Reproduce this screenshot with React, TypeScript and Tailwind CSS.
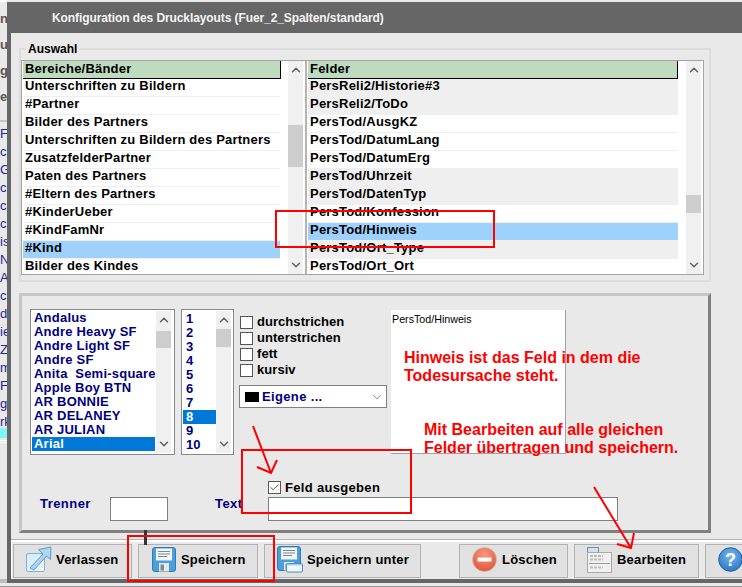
import React from 'react';
import { ChevronUp, ChevronDown, Check } from 'lucide-react';

const bereiche = [
  'Unterschriften zu Bildern',
  '#Partner',
  'Bilder des Partners',
  'Unterschriften zu Bildern des Partners',
  'ZusatzfelderPartner',
  'Paten des Partners',
  '#Eltern des Partners',
  '#KinderUeber',
  '#KindFamNr',
  '#Kind',
  'Bilder des Kindes',
];

const felder = [
  { t: 'PersReli2/Historie#3', gray: true },
  { t: 'PersReli2/ToDo', gray: true },
  { t: 'PersTod/AusgKZ' },
  { t: 'PersTod/DatumLang' },
  { t: 'PersTod/DatumErg' },
  { t: 'PersTod/Uhrzeit', gray: true },
  { t: 'PersTod/DatenTyp', gray: true },
  { t: 'PersTod/Konfession' },
  { t: 'PersTod/Hinweis', sel: true },
  { t: 'PersTod/Ort_Type', gray: true },
  { t: 'PersTod/Ort_Ort' },
];

const fonts = ['Andalus', 'Andre Heavy SF', 'Andre Light SF', 'Andre SF', 'Anita  Semi-square', 'Apple Boy BTN', 'AR BONNIE', 'AR DELANEY', 'AR JULIAN', 'Arial'];
const sizes = ['1', '2', '3', '4', '5', '6', '7', '8', '9', '10'];
const stripTop = ['n', 'ut', 'g', 'el'];
const stripList = ['Fa', 'ck', 'Ge', 'ck', 'ck', 'ck', 'is', 'Nr', 'Au', 'ck', 'de', 'ie', 'Ze', 'm', 'Fa', 'g', 'rk'];

function Track({ thumbTop, thumbH, className }: { thumbTop: number; thumbH: number; className: string }) {
  return (
    <div className={`relative flex flex-col items-center justify-between bg-[#f0f0f0] text-[#606060] ${className}`}>
      <ChevronUp size={14} strokeWidth={2.5} className="mt-[2px]" />
      <div className="absolute left-0 right-0 bg-[#cdcdcd]" style={{ top: thumbTop, height: thumbH }} />
      <ChevronDown size={14} strokeWidth={2.5} className="mb-[2px]" />
    </div>
  );
}

function Box({ label }: { label: string }) {
  return (
    <div className="flex h-[16px] items-center">
      <div className="h-[13px] w-[13px] border border-[#555] bg-white" />
      <span className="ml-[4px] text-[13px] font-bold tracking-[0.05px] text-black">{label}</span>
    </div>
  );
}

function VerlassenIcon() {
  return (
    <svg width="26" height="27" viewBox="0 0 26 27">
      <defs>
        <linearGradient id="vg" x1="0" y1="0" x2="1" y2="1">
          <stop offset="0" stopColor="#cfeafb" />
          <stop offset="1" stopColor="#f3fafe" />
        </linearGradient>
      </defs>
      <rect x="0.5" y="7.5" width="18" height="18" rx="1.5" fill="url(#vg)" stroke="#7fb2d6" />
      <path d="M4 22 L17 8 L12.5 3.5 L25 1 L24.5 13.5 L20.5 10 L8 24 Z" fill="#a9d6f3" stroke="#5f9cc8" strokeWidth="1" />
    </svg>
  );
}

function Floppy() {
  return (
    <>
      <rect x="0.5" y="0.5" width="23" height="24" rx="2.5" fill="#4b9fdd" stroke="#2f79b5" />
      <rect x="4" y="1.5" width="16" height="12" fill="#f4f6f8" />
      <path d="M6 4.5 H18 M6 7 H18 M6 9.5 H15" stroke="#7d8790" strokeWidth="1" />
      <rect x="7" y="16" width="10" height="8.5" fill="#e6e9ec" />
      <rect x="8.5" y="17.5" width="3.5" height="6" fill="#7f8a94" />
    </>
  );
}

function SaveIcon() {
  return (
    <svg width="24" height="25" viewBox="0 0 24 25">
      <Floppy />
    </svg>
  );
}

function SaveAsIcon() {
  return (
    <svg width="26" height="27" viewBox="0 0 26 27">
      <Floppy />
      <rect x="9.5" y="17.5" width="16" height="8.5" rx="1" fill="#f3f8fc" stroke="#4b8fc4" />
      <rect x="10" y="18" width="15" height="1.5" fill="#a7cce8" />
    </svg>
  );
}

function DeleteIcon() {
  return (
    <svg width="25" height="25" viewBox="0 0 25 25">
      <defs>
        <radialGradient id="dg" cx="0.5" cy="0.3" r="0.8">
          <stop offset="0" stopColor="#f79a80" />
          <stop offset="1" stopColor="#de4a2c" />
        </radialGradient>
      </defs>
      <circle cx="12.5" cy="12.5" r="12" fill="url(#dg)" stroke="#c9c2bc" strokeWidth="0.8" />
      <rect x="5.5" y="10.5" width="14" height="4" rx="0.5" fill="#ffffff" />
    </svg>
  );
}

function EditIcon() {
  return (
    <svg width="25" height="26" viewBox="0 0 25 26">
      <rect x="0.5" y="0.5" width="11" height="5" fill="#cfe0ee" stroke="#6d8fab" />
      <rect x="0.5" y="5.5" width="24" height="20" fill="#f0f0f0" stroke="#a8a8a8" />
      <path d="M3 9 H16 M3 12.5 H16 M3 20.5 H16" stroke="#bdbdbd" strokeWidth="2" strokeDasharray="3 1" />
      <path d="M2 16.5 H23" stroke="#9a9a9a" strokeWidth="1" />
    </svg>
  );
}

function HelpIcon() {
  return (
    <svg width="25" height="25" viewBox="0 0 25 25" className="flex-none">
      <defs>
        <radialGradient id="hg" cx="0.5" cy="0.35" r="0.75">
          <stop offset="0" stopColor="#79b8ee" />
          <stop offset="1" stopColor="#1f6fc0" />
        </radialGradient>
      </defs>
      <circle cx="12.5" cy="12.5" r="11.8" fill="url(#hg)" stroke="#1b5fa6" />
      <text x="12.5" y="19" textAnchor="middle" fontSize="18" fontWeight="700" fill="#ffffff" fontFamily="Liberation Sans, sans-serif">?</text>
    </svg>
  );
}

function BarButton({ w, pl, gap, icon, label }: { w: string; pl: string; gap: string; icon: React.ReactNode; label?: string }) {
  return (
    <div className={`flex h-[34px] flex-none items-center border border-[#b2b2b2] bg-[#e1e1e1] pb-[3px] ${w} ${pl}`}>
      {icon}
      {label && <span className={`text-[13px] font-bold tracking-[0.2px] text-black ${gap}`}>{label}</span>}
    </div>
  );
}

export default function App() {
  return (
    <div className="relative flex h-[587px] w-[742px] overflow-hidden bg-[#e9e9e9] font-['Liberation_Sans',Arial,sans-serif]">
      {/* what is left visible of the main window behind the dialog */}
      <div className="flex w-[7px] flex-none flex-col overflow-hidden whitespace-nowrap">
        <div className="h-[2px] flex-none bg-white" />
        <div className="flex flex-none flex-col pt-[9px] text-[13px] font-bold text-[#555]">
          {stripTop.map((s, i) => (
            <div key={i} className="h-[26px] leading-[16px]">{s}</div>
          ))}
        </div>
        <div className="mt-[5px] h-[2px] flex-none bg-[#c4c4c4]" />
        <div className="flex flex-none flex-col pt-[3px] text-[13px] text-[#24249a]">
          {stripList.map((s, i) => (
            <div key={i} className="h-[18px] leading-[18px]">{s}</div>
          ))}
        </div>
        <div className="mt-[-3px] h-[10px] flex-none bg-[#7ff6f6]" />
        <div className="mt-[2px] h-[1px] flex-none bg-white" />
        <div className="mt-[1px] h-[1px] flex-none bg-white" />
        <div className="mt-auto mb-[4px] h-[4px] flex-none bg-[#bdbdbd]" />
      </div>

      {/* dialog */}
      <div className="mt-[2px] mb-[4px] flex w-[760px] flex-none flex-col">
        <div className="flex h-[31px] flex-none items-center bg-[#666666] pl-[45px] text-[12px] font-bold tracking-[-0.09px] text-[#f4f4f4]">
          Konfiguration des Drucklayouts (Fuer_2_Spalten/standard)
        </div>

        <div className="flex flex-1 flex-col border-b-4 border-l-4 border-[#666666] bg-[#e9e9e9]">
          <fieldset className="ml-[8px] mt-[7px] h-[242px] w-[692px] flex-none border-2 border-[#dcdcdc] pl-0">
            <legend className="ml-[5px] px-[2px] text-[12px] font-bold leading-[18px] text-black">Auswahl</legend>
            <div className="mt-[2px] flex h-[215px] w-[683px] overflow-hidden border border-[#a4a4a4] bg-white text-[13px] font-bold tracking-[0.21px] text-black">
              <div className="flex w-[285px] flex-none border-r-2 border-[#b4b4b4]">
                <div className="w-[258px] flex-none pl-[1px]">
                  <div className="h-[18px] w-[258px] border-b border-r border-black bg-[#bfdbbf] pl-[2px] leading-[15px]">Bereiche/Bänder</div>
                  {bereiche.map((b) => (
                    <div key={b} className={`h-[18px] whitespace-nowrap border-b border-[#efefef] pl-[2px] leading-[13px] ${b === '#Kind' ? 'bg-[#9fd1fd]' : ''}`}>
                      {b}
                    </div>
                  ))}
                </div>
                <Track thumbTop={64} thumbH={42} className="ml-[8px] w-[15px] flex-none" />
              </div>
              <div className="flex flex-1">
                <div className="ml-[1px] w-[370px] flex-none">
                  <div className="h-[18px] border-b border-r border-black bg-[#bfdbbf] pl-[2px] leading-[15px]">Felder</div>
                  {felder.map((f) => (
                    <div
                      key={f.t}
                      className={`h-[18px] whitespace-nowrap border-b border-[#efefef] pl-[2px] leading-[13px] ${f.sel ? 'bg-[#9fd1fd]' : f.gray ? 'bg-[#efefef]' : ''}`}
                    >
                      {f.t}
                    </div>
                  ))}
                </div>
                <Track thumbTop={134} thumbH={18} className="ml-[8px] w-[15px] flex-none" />
              </div>
            </div>
          </fieldset>

          <div className="ml-[8px] mt-[11px] flex h-[240px] w-[692px] flex-none flex-col border-[3px] border-b-[#808080] border-l-[#c6c6c6] border-r-[#808080] border-t-[#c6c6c6]">
            <div className="ml-[8px] mt-[13px] flex h-[146px] flex-none items-start">
              <div className="flex h-[146px] w-[145px] flex-none overflow-hidden border border-[#8a8a8a] bg-white text-[13px] font-bold leading-[14px] tracking-[0.22px] text-[#000080]">
                <div className="w-[124px] flex-none pl-[1px] pt-[1px]">
                  {fonts.map((f) => (
                    <div key={f} className={`h-[14px] whitespace-pre pl-[2px] ${f === 'Arial' ? 'bg-[#0078d7] text-white' : ''}`}>{f}</div>
                  ))}
                </div>
                <Track thumbTop={20} thumbH={17} className="my-[1px] ml-[1px] w-[15px] flex-none" />
              </div>
              <div className="ml-[6px] flex h-[146px] w-[53px] flex-none overflow-hidden border border-[#8a8a8a] bg-white text-[13px] font-bold leading-[14px] text-[#000080]">
                <div className="w-[34px] flex-none pl-[1px] pt-[2px]">
                  {sizes.map((s) => (
                    <div key={s} className={`h-[14px] pl-[3px] ${s === '8' ? 'bg-[#0078d7] text-white' : ''}`}>{s}</div>
                  ))}
                </div>
                <Track thumbTop={18} thumbH={18} className="my-[1px] w-[15px] flex-none" />
              </div>
              <div className="ml-[5px] flex w-[148px] flex-none flex-col pt-[5px]">
                <div className="pl-[1px]">
                  <Box label="durchstrichen" />
                  <Box label="unterstrichen" />
                  <Box label="fett" />
                  <Box label="kursiv" />
                </div>
                <div className="mt-[7px] flex h-[23px] items-center border border-[#808080] bg-white pl-[5px] pr-[2px]">
                  <div className="h-[10px] w-[14px] flex-none bg-black" />
                  <span className="ml-[3px] text-[13px] font-bold tracking-[0.35px] text-[#000080]">Eigene ...</span>
                  <ChevronDown size={14} strokeWidth={1.2} className="ml-auto text-[#555]" />
                </div>
              </div>
              <div className="ml-[4px] mt-[1px] h-[144px] w-[175px] flex-none border-b border-r border-[#a0a0a0] bg-white pl-[1px] pt-[3px] text-[10.7px] leading-[12px] text-black">
                PersTod/Hinweis
              </div>
            </div>

            <div className="ml-[246px] mt-[26px] flex h-[13px] flex-none items-center">
              <div className="flex h-[13px] w-[13px] flex-none items-center justify-center border border-[#555] bg-white text-[#444]">
                <Check size={11} strokeWidth={2} />
              </div>
              <span className="ml-[4px] text-[13px] font-bold tracking-[0.32px] text-black">Feld ausgeben</span>
            </div>

            <div className="mt-[3px] flex flex-none items-start text-[13px] font-bold tracking-[0.45px] text-[#000080]">
              <span className="ml-[18px] w-[70px] leading-[14px]">Trenner</span>
              <div className="h-[24px] w-[58px] border border-[#808080] bg-white" />
              <span className="ml-[47px] w-[53px] leading-[14px]">Text</span>
              <div className="h-[24px] w-[350px] border border-[#808080] bg-white" />
            </div>
          </div>

          <div className="mt-[6px] h-[1px] flex-none bg-[#b4b4b4]" />
          <div className="h-[2px] flex-none bg-white" />
          <div className="flex flex-1 items-start border-l border-white pl-[1px] pt-[2px]">
            <BarButton w="w-[119px]" pl="pl-[12px]" gap="ml-[4px]" icon={<VerlassenIcon />} label="Verlassen" />
            <BarButton w="ml-[6px] w-[120px]" pl="pl-[13px]" gap="ml-[5px]" icon={<SaveIcon />} label="Speichern" />
            <BarButton w="ml-[6px] w-[157px]" pl="pl-[12px]" gap="ml-[4px]" icon={<SaveAsIcon />} label="Speichern unter" />
            <BarButton w="ml-[38px] w-[109px]" pl="pl-[12px]" gap="ml-[5px]" icon={<DeleteIcon />} label="Löschen" />
            <BarButton w="ml-[6px] w-[125px]" pl="pl-[12px]" gap="ml-[5px]" icon={<EditIcon />} label="Bearbeiten" />
            <BarButton w="ml-[6px] w-[60px]" pl="pl-[12px]" gap="" icon={<HelpIcon />} />
          </div>
        </div>
      </div>

      {/* strip under the dialog */}
      <div className="absolute bottom-0 left-0 right-0 h-[1px] bg-[#9a9a9a]" />

      {/* small dark tick above the Speichern button */}
      <div className="absolute left-[144px] top-[530px] h-[15px] w-[3px] bg-[#333]" />

      {/* red annotations painted over the screenshot */}
      <div className="absolute left-[275px] top-[210px] h-[38px] w-[220px] border-2 border-[#ff0000]" />
      <div className="absolute left-[241px] top-[449px] h-[65px] w-[171px] border-2 border-[#ff0000]" />
      <div className="absolute left-[127px] top-[535px] h-[47px] w-[148px] border-2 border-[#ff0000]" />
      <svg className="absolute left-0 top-0" width="742" height="587" fill="none" stroke="#ff0000" strokeWidth="2">
        <path d="M253 426 L271 473 M277 460 L271 473 L257 467" />
        <path d="M594 487 L631 548 M634 533 L631 548 L617 544" />
      </svg>
      <div className="absolute left-[404px] top-[349px] text-[16px] font-bold leading-[18px] text-[#ff0000]">
        Hinweis ist das Feld in dem die
        <br />
        Todesursache steht.
      </div>
      <div className="absolute left-[424px] top-[421px] text-[16px] font-bold leading-[18px] text-[#ff0000]">
        Mit Bearbeiten auf alle gleichen
        <br />
        Felder übertragen und speichern.
      </div>
    </div>
  );
}
